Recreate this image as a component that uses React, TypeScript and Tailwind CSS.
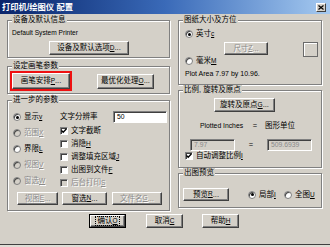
import React from 'react';

const FONT = "font-['Liberation_Sans','Noto_Sans_CJK_SC',sans-serif]";
const DIS = 'text-[#8a8a8a] [text-shadow:1px_1px_0_#ffffff]';

function Group({ label, className = '', children }: { label: string; className?: string; children?: React.ReactNode }) {
    return (
        <div className={`relative border border-[#808080] shadow-[inset_1px_1px_0_#ffffff,1px_1px_0_#ffffff] ${className}`}>
            <span className="absolute -top-[6px] left-[4px] bg-[#d4d0c8] px-[1px] leading-[10px]">{label}</span>
            {children}
        </div>
    );
}

function Btn({ children, className = '', disabled = false }: { children: React.ReactNode; className?: string; disabled?: boolean }) {
    return (
        <button
            type="button"
            className={`flex items-center justify-center border border-t-white border-l-white border-r-[#404040] border-b-[#404040] bg-[#d4d0c8] leading-none shadow-[inset_-1px_-1px_0_#808080] ${disabled ? DIS : 'text-black'} ${className}`}
        >
            {children}
        </button>
    );
}

function Radio({ label, k, checked = false, disabled = false }: { label: string; k?: string; checked?: boolean; disabled?: boolean }) {
    return (
        <div className="flex items-center">
            <span className={`flex h-[8px] w-[8px] items-center justify-center rounded-full border border-[#808080] shadow-[inset_1px_1px_0_#404040] ${disabled ? 'bg-[#d4d0c8]' : 'bg-white'}`}>
                {checked && <span className="h-[3px] w-[3px] rounded-full bg-black" />}
            </span>
            <span className={`ml-[3px] leading-none ${disabled ? DIS : ''}`}>
                {label}
                {k && <u className="text-[6.5px]">{k}</u>}
            </span>
        </div>
    );
}

function Check({ label, k, checked = false, disabled = false }: { label: string; k?: string; checked?: boolean; disabled?: boolean }) {
    return (
        <div className="flex items-center">
            <span className={`flex h-[8px] w-[8px] items-center justify-center border border-t-[#808080] border-l-[#808080] border-r-white border-b-white shadow-[inset_1px_1px_0_#404040] ${disabled ? 'bg-[#d4d0c8]' : 'bg-white'}`}>
                {checked && (
                    <svg width="6" height="6" viewBox="0 0 6 6">
                        <path d="M0.5 2.5 L2.2 4.3 L5.5 0.8" stroke="#000" strokeWidth="1.3" fill="none" />
                    </svg>
                )}
            </span>
            <span className={`ml-[3px] leading-none ${disabled ? DIS : ''}`}>
                {label}
                {k && <u className="text-[6.5px]">{k}</u>}
            </span>
        </div>
    );
}

function Field({ value, className = '', disabled = false }: { value: string; className?: string; disabled?: boolean }) {
    return (
        <div className={`flex items-center border border-t-[#808080] border-l-[#808080] border-r-white border-b-white pl-[3px] text-[6.8px] shadow-[inset_1px_1px_0_#404040] ${disabled ? 'bg-[#d4d0c8] text-[#8a8a8a]' : 'bg-white'} ${className}`}>
            {value}
        </div>
    );
}

export default function App() {
    return (
        <div className={`flex h-[247px] w-[330px] flex-col overflow-hidden bg-[#d4d0c8] text-[7.5px] text-black ${FONT}`}>
            {/* title bar */}
            <div className="flex h-[14px] items-center justify-between bg-gradient-to-r from-[#0a246a] via-[#3a6ab8] to-[#a6caf0] pl-[2px] pr-[4px]">
                <span className="text-[8.3px] font-bold leading-none text-white">打印机/绘图仪 配置</span>
                <span className="flex h-[9px] w-[10px] items-center justify-center border border-t-white border-l-white border-r-[#404040] border-b-[#404040] bg-[#d4d0c8]">
                    <svg width="6" height="5" viewBox="0 0 6 5">
                        <path d="M0.5 0.5 L5.5 4.5 M5.5 0.5 L0.5 4.5" stroke="#000" strokeWidth="1.2" />
                    </svg>
                </span>
            </div>

            <div className="flex pl-[7px] pt-[6px]">
                {/* left column */}
                <div className="flex w-[163px] flex-col">
                    <Group label="设备及默认信息" className="h-[38px]">
                        <div className="flex flex-col pl-[4px] pt-[7px]">
                            <div className="flex h-[9px] items-center text-[6.6px]">Default System Printer</div>
                            <Btn className="ml-[37px] mt-[4px] h-[14px] w-[80px]">
                                设备及默认选项<u className="text-[6.5px]">D</u>...
                            </Btn>
                        </div>
                    </Group>

                    <Group label="设定画笔参数" className="mt-[8px] h-[28px]">
                        <div className="flex items-center pl-[2px] pt-[4px]">
                            <div className="flex h-[20px] w-[62px] items-center justify-center border-2 border-[#ee1111]">
                                <Btn className="h-[16px] w-[58px]">
                                    画笔安排<u className="text-[6.5px]">P</u>...
                                </Btn>
                            </div>
                            <Btn className="ml-[25px] h-[15px] w-[57px]">
                                最优化处理<u className="text-[6.5px]">O</u>...
                            </Btn>
                        </div>
                    </Group>

                    <Group label="进一步的参数" className="mt-[6px] h-[111px]">
                        <div className="flex">
                            <div className="flex w-[52px] flex-col pl-[5px] pt-[8px]">
                                <div className="flex h-[16px] items-center"><Radio label="显示" k="v" checked /></div>
                                <div className="flex h-[16px] items-center"><Radio label="范围" k="X" disabled /></div>
                                <div className="flex h-[16px] items-center"><Radio label="界限" k="L" /></div>
                                <div className="flex h-[16px] items-center"><Radio label="视图" k="V" disabled /></div>
                                <div className="flex h-[16px] items-center"><Radio label="窗选" k="W" disabled /></div>
                            </div>
                            <div className="flex flex-col pt-[9px]">
                                <div className="flex h-[14px] items-center">
                                    <span className="w-[53px] leading-none">文字分辨率</span>
                                    <Field value="50" className="h-[12px] w-[54px]" />
                                </div>
                                <div className="flex h-[13px] items-center"><Check label="文字截断" checked /></div>
                                <div className="flex h-[13px] items-center"><Check label="消隐" k="H" /></div>
                                <div className="flex h-[13px] items-center"><Check label="调整填充区域" k="J" /></div>
                                <div className="flex h-[13px] items-center"><Check label="出图到文件" k="F" /></div>
                                <div className="flex h-[13px] items-center"><Check label="后台打印" k="S" disabled /></div>
                            </div>
                        </div>
                        <div className="mt-[3px] flex pl-[9px]">
                            <Btn disabled className="h-[13px] w-[41px]">
                                视图<u className="text-[6.5px]">E</u>...
                            </Btn>
                            <Btn className="ml-[4px] h-[13px] w-[45px]">
                                窗选<u className="text-[6.5px]">N</u>...
                            </Btn>
                            <Btn disabled className="ml-[5px] h-[13px] w-[50px]">
                                文件名<u className="text-[6.5px]">G</u>...
                            </Btn>
                        </div>
                    </Group>
                </div>

                {/* right column */}
                <div className="ml-[8px] flex w-[144px] flex-col">
                    <Group label="图纸大小及方位" className="h-[65px]">
                        <div className="flex flex-col pl-[6px] pt-[8px]">
                            <div className="flex h-[10px] items-center"><Radio label="英寸" k="c" checked /></div>
                            <div className="flex h-[17px] items-start pt-[3px]">
                                <Btn disabled className="ml-[39px] h-[13px] w-[44px]">
                                    尺寸<u className="text-[6.5px]">Z</u>...
                                </Btn>
                                <div className="ml-[35px] h-[15px] w-[15px] border border-[#6a6a6a] shadow-[inset_1px_1px_0_#ffffff]" />
                            </div>
                            <div className="flex h-[10px] items-center"><Radio label="毫米" k="M" /></div>
                            <div className="mt-[3px] flex h-[10px] items-center text-[7px]">Plot Area 7.97 by 10.96.</div>
                        </div>
                    </Group>

                    <Group label="比例, 旋转及原点" className="mt-[5px] h-[78px]">
                        <div className="flex flex-col pt-[7px]">
                            <Btn className="ml-[35px] h-[14px] w-[61px]">
                                旋转及原点<u className="text-[6.5px]">G</u>...
                            </Btn>
                            <div className="mt-[9px] flex h-[10px] items-center pl-[21px]">
                                <span className="w-[50px] text-[6.8px] leading-none">Plotted Inches</span>
                                <span className="w-[10px] text-center leading-none">=</span>
                                <span className="ml-[5px] leading-none">图形单位</span>
                            </div>
                            <div className="mt-[8px] flex h-[12px] items-center pl-[11px]">
                                <Field value="7.97" disabled className="h-[12px] w-[45px]" />
                                <span className="w-[32px] text-center leading-none">=</span>
                                <Field value="509.6939" disabled className="h-[12px] w-[45px]" />
                            </div>
                            <div className="flex h-[10px] items-center pl-[6px]"><Check label="自动调整比例" k="I" checked /></div>
                        </div>
                    </Group>

                    <Group label="出图预览" className="mt-[5px] h-[35px]">
                        <div className="flex items-center pl-[4px] pt-[14px]">
                            <Btn className="h-[13px] w-[46px]">
                                预览<u className="text-[6.5px]">R</u>...
                            </Btn>
                            <div className="ml-[19px] w-[36px]"><Radio label="局部" k="I" checked /></div>
                            <Radio label="全图" k="U" />
                        </div>
                    </Group>
                </div>
            </div>

            {/* dialog buttons */}
            <div className="mt-[3px] flex pl-[89px]">
                <div className="h-[14px] w-[37px] border border-black">
                    <Btn className="h-full w-full">
                        <span className="border border-dotted border-black px-[1px] leading-[8px]">
                            确认<u className="text-[6.5px]">O</u>
                        </span>
                    </Btn>
                </div>
                <Btn className="ml-[20px] h-[14px] w-[37px]">
                    取消<u className="text-[6.5px]">C</u>
                </Btn>
                <Btn className="ml-[19px] h-[14px] w-[37px]">
                    帮助<u className="text-[6.5px]">H</u>
                </Btn>
            </div>

            <div className="mt-auto h-[1px] bg-[#404040]" />
            <div className="h-[2px] bg-[#e0ddd6]" />
        </div>
    );
}
